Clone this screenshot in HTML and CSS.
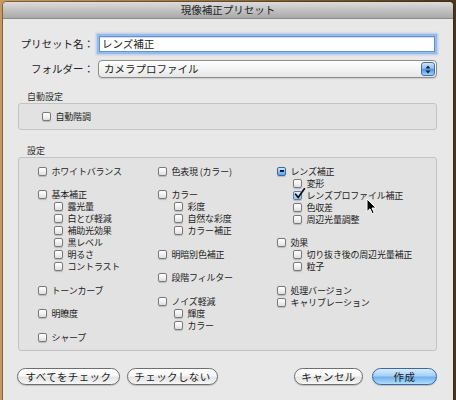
FILE: index.html
```html
<!DOCTYPE html>
<html lang="ja">
<head>
<meta charset="utf-8">
<title>現像補正プリセット</title>
<link rel="stylesheet" href="styles.css">
</head>
<body>
<div class="window">
  <div class="titlebar">現像補正プリセット</div>
  <div class="body">
    <div class="form-row">
      <div class="form-label">プリセット名：</div>
      <div class="input">レンズ補正</div>
    </div>
    <div class="form-row">
      <div class="form-label">フォルダー：</div>
      <div class="select">カメラプロファイル
        <span class="stepper"><svg width="12" height="13" viewBox="0 0 12 13"><path d="M6 2.5 L8.5 5.5 L3.5 5.5 Z M6 10.5 L8.5 7.5 L3.5 7.5 Z" fill="#10203a"/></svg></span>
      </div>
    </div>

    <div class="section-label">自動設定</div>
    <div class="group auto">
      <div class="item"><span class="cb"></span>自動階調</div>
    </div>

    <div class="section-label second">設定</div>
    <div class="group settings">
      <div class="col">
        <div class="grp"><div class="item"><span class="cb"></span>ホワイトバランス</div></div>
        <div class="grp">
          <div class="item"><span class="cb"></span>基本補正</div>
          <div class="sub">
            <div class="item"><span class="cb"></span>露光量</div>
            <div class="item"><span class="cb"></span>白とび軽減</div>
            <div class="item"><span class="cb"></span>補助光効果</div>
            <div class="item"><span class="cb"></span>黒レベル</div>
            <div class="item"><span class="cb"></span>明るさ</div>
            <div class="item"><span class="cb"></span>コントラスト</div>
          </div>
        </div>
        <div class="grp"><div class="item"><span class="cb"></span>トーンカーブ</div></div>
        <div class="grp"><div class="item"><span class="cb"></span>明瞭度</div></div>
        <div class="grp"><div class="item"><span class="cb"></span>シャープ</div></div>
      </div>
      <div class="col">
        <div class="grp"><div class="item"><span class="cb"></span>色表現 (カラー)</div></div>
        <div class="grp">
          <div class="item"><span class="cb"></span>カラー</div>
          <div class="sub">
            <div class="item"><span class="cb"></span>彩度</div>
            <div class="item"><span class="cb"></span>自然な彩度</div>
            <div class="item"><span class="cb"></span>カラー補正</div>
          </div>
        </div>
        <div class="grp"><div class="item"><span class="cb"></span>明暗別色補正</div></div>
        <div class="grp"><div class="item"><span class="cb"></span>段階フィルター</div></div>
        <div class="grp">
          <div class="item"><span class="cb"></span>ノイズ軽減</div>
          <div class="sub">
            <div class="item"><span class="cb"></span>輝度</div>
            <div class="item"><span class="cb"></span>カラー</div>
          </div>
        </div>
      </div>
      <div class="col">
        <div class="grp">
          <div class="item"><span class="cb mixed"></span>レンズ補正</div>
          <div class="sub">
            <div class="item"><span class="cb"></span>変形</div>
            <div class="item"><span class="cb checked"><svg class="check" width="12" height="12" viewBox="0 0 12 12"><path d="M1.6 6.2 L4.2 9.6 L10.4 0.8" fill="none" stroke="#111" stroke-width="1.7" stroke-linecap="round" stroke-linejoin="round"/></svg></span>レンズプロファイル補正</div>
            <div class="item"><span class="cb"></span>色収差</div>
            <div class="item"><span class="cb"></span>周辺光量調整</div>
          </div>
        </div>
        <div class="grp">
          <div class="item"><span class="cb"></span>効果</div>
          <div class="sub">
            <div class="item"><span class="cb"></span>切り抜き後の周辺光量補正</div>
            <div class="item"><span class="cb"></span>粒子</div>
          </div>
        </div>
        <div class="grp">
          <div class="item"><span class="cb"></span>処理バージョン</div>
          <div class="item"><span class="cb"></span>キャリブレーション</div>
        </div>
      </div>
    </div>

    <div class="buttons">
      <div class="btn w-all">すべてをチェック</div>
      <div class="btn w-none">チェックしない</div>
      <div class="btn w-cancel push">キャンセル</div>
      <div class="btn w-ok primary">作成</div>
    </div>
  </div>
  <svg class="cursor" width="12" height="17" viewBox="0 0 12 17"><path d="M1 1 L1 13.5 L4 10.8 L6.2 15.6 L8.2 14.7 L6 10 L10 10 Z" fill="#000" stroke="#fff" stroke-width="1" stroke-linejoin="round"/></svg>
</div>
</body>
</html>
```

FILE: styles.css
```css
html, body {
  margin: 0;
  padding: 0;
}

body {
  width: 456px;
  height: 400px;
  overflow: hidden;
  background: linear-gradient(90deg, #c49a5e, #a07844 40%, #6b4e28 80%, #4a3518);
  font-family: "Noto Sans CJK JP", "Noto Sans", sans-serif;
  color: #1c1c1c;
}

.window {
  position: relative;
  margin: 2px 0 0 3px;
  width: 450px;
  height: 398px;
  background: #e8e8e8;
  box-shadow: 0 0 0 1px rgba(40, 30, 20, 0.45);
  border-radius: 4px 4px 0 0;
}

.titlebar {
  height: 16px;
  line-height: 16px;
  border-bottom: 1px solid #8a8a8a;
  border-radius: 4px 4px 0 0;
  background: linear-gradient(#dcdcdc, #c2c2c2 50%, #a9a9a9);
  text-align: center;
  font-size: 10.5px;
  color: #222;
}

.body {
  padding: 16px 16px 0 15px;
}

.form-row {
  display: flex;
  align-items: center;
  height: 18px;
}

.form-row + .form-row {
  margin-top: 7px;
}

.form-label {
  flex: none;
  width: 76px;
  text-align: right;
  font-size: 10.5px;
  line-height: 18px;
  white-space: nowrap;
  color: #222;
}

.input {
  flex: 1;
  margin-left: 5px;
  margin-right: 2px;
  height: 16px;
  box-sizing: border-box;
  border: 1px solid #5f93d6;
  background: #fff;
  box-shadow: 0 0 0 2px #94bbec, 0 0 2px 3px rgba(110, 160, 225, 0.45), inset 0 1px 1px rgba(0, 0, 0, 0.15);
  padding-left: 2px;
  font-size: 10.5px;
  line-height: 14px;
}

.select {
  flex: 1;
  margin-left: 4px;
  height: 18px;
  box-sizing: border-box;
  border: 1px solid #8c8c8c;
  border-radius: 4px;
  background: linear-gradient(#ffffff, #f3f3f3 50%, #e6e6e6);
  box-shadow: 0 1px 1px rgba(0, 0, 0, 0.12);
  display: flex;
  align-items: center;
  padding-left: 5px;
  font-size: 10.5px;
  line-height: 16px;
}

.stepper {
  margin-left: auto;
  margin-right: 1px;
  width: 14px;
  height: 14px;
  box-sizing: border-box;
  border: 1px solid #4271ad;
  border-radius: 3px;
  background: linear-gradient(#cfe5fb, #8ec0f0 45%, #4f97e2 55%, #9fd0fb);
  display: flex;
  align-items: center;
  justify-content: center;
}

.section-label {
  margin-top: 13px;
  padding-left: 9px;
  font-size: 9px;
  line-height: 12px;
  color: #333;
}

.section-label.second {
  margin-top: 15px;
}

.group {
  border: 1px solid #c3c3c3;
  border-radius: 3px;
  background: #e2e2e2;
  box-sizing: border-box;
}

.group.auto {
  height: 27px;
  display: flex;
  align-items: center;
  padding-left: 23px;
}

.group.settings {
  height: 194px;
  padding: 7px 0 0 19px;
  display: grid;
  grid-template-columns: 120px 119px 1fr;
  align-items: start;
}

.col {
  display: flex;
  flex-direction: column;
  gap: 11.5px;
}

.sub {
  padding-left: 16px;
}

.item {
  display: flex;
  align-items: center;
  height: 12px;
  font-size: 9px;
  letter-spacing: -0.2px;
  white-space: nowrap;
  color: #1c1c1c;
}

.cb {
  position: relative;
  flex: none;
  width: 9px;
  height: 9px;
  box-sizing: border-box;
  margin-right: 4.5px;
  border: 1px solid #7a7a7a;
  border-radius: 2px;
  background: linear-gradient(#ffffff, #f1f1f1 50%, #dedede);
  box-shadow: 0 0.5px 1px rgba(0, 0, 0, 0.18);
}

.cb.mixed {
  border-color: #3e6aa3;
  background: linear-gradient(#d4e8fc, #8fc0f0 50%, #5ea3e8);
}

.cb.mixed::after {
  content: "";
  position: absolute;
  left: 1.5px;
  top: 2.5px;
  width: 4px;
  height: 2px;
  background: #0d1a30;
}

.cb.checked {
  background: linear-gradient(#e4f0fc, #b8d6f4 50%, #9cc4ee);
  border-color: #5a7faa;
}

.check {
  position: absolute;
  left: 0;
  top: -4px;
}

.buttons {
  display: flex;
  margin-top: 17px;
  margin-left: -1px;
}

.btn {
  height: 17px;
  box-sizing: border-box;
  border: 1px solid #6e6e6e;
  border-radius: 9px;
  background: linear-gradient(#ffffff, #f7f7f7 45%, #e4e4e4 55%, #f6f6f6);
  box-shadow: 0 1px 1px rgba(0, 0, 0, 0.18);
  text-align: center;
  font-size: 10.5px;
  line-height: 15px;
  letter-spacing: 0.4px;
  color: #1c1c1c;
  white-space: nowrap;
}

.w-all { width: 103px; }
.w-none { width: 91px; margin-left: 7px; }
.w-cancel { width: 69px; }
.w-ok { width: 65px; margin-left: 9px; }

.push {
  margin-left: auto;
}

.btn.primary {
  border-color: #3a67a3;
  background: linear-gradient(#d8ecfd, #a6d0f6 45%, #6fb2ee 55%, #b2dcfc);
}

.cursor {
  position: absolute;
  left: 363px;
  top: 196px;
}
```
